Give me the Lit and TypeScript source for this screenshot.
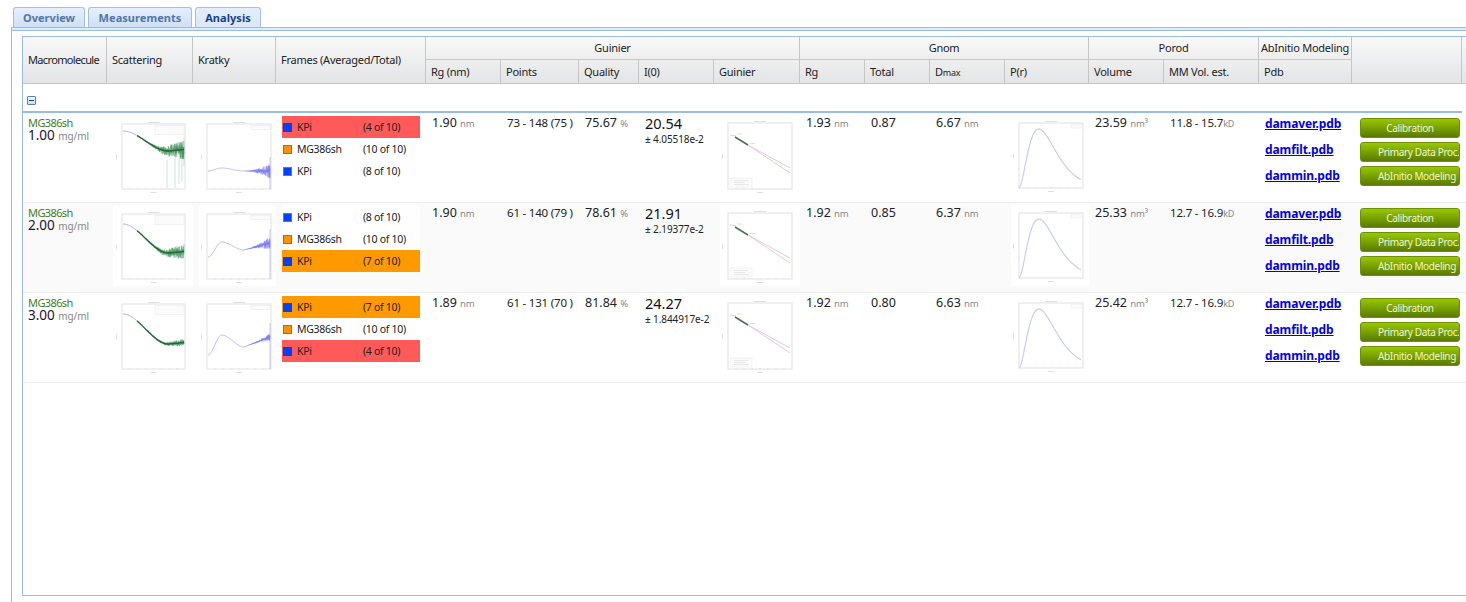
import { LitElement, html, css, svg } from 'lit';
import { customElement, property } from 'lit/decorators.js';

type PlotKind = 'scattering' | 'kratky' | 'guinier' | 'pr';

interface Frame { name: string; count: string; swatch: 'blue' | 'orange'; mark?: 'red' | 'amber'; }
interface Row {
  conc: string; rg: string; points: string; quality: string; i0: string; i0err: string;
  gRg: string; total: string; dmax: string; volume: string; mm: string;
  noise: number; spikes: boolean; kratky: number[]; curve: number[]; frames: Frame[];
}

const COLS = [84, 86, 83, 150, 75, 78, 60, 75, 86, 65, 65, 75, 84, 75, 95, 93, 110, 20];

const rows: Row[] = [
  {
    conc: '1.00', rg: '1.90', points: '73 - 148 (75 )', quality: '75.67', i0: '20.54', i0err: '± 4.05518e-2',
    gRg: '1.93', total: '0.87', dmax: '6.67', volume: '23.59', mm: '11.8 - 15.7',
    noise: 10, spikes: true, kratky: [55, 52, 55, 55], curve: [15, 35],
    frames: [
      { name: 'KPi', count: '(4 of 10)', swatch: 'blue', mark: 'red' },
      { name: 'MG386sh', count: '(10 of 10)', swatch: 'orange' },
      { name: 'KPi', count: '(8 of 10)', swatch: 'blue' },
    ],
  },
  {
    conc: '2.00', rg: '1.90', points: '61 - 140 (79 )', quality: '78.61', i0: '21.91', i0err: '± 2.19377e-2',
    gRg: '1.92', total: '0.85', dmax: '6.37', volume: '25.33', mm: '12.7 - 16.9',
    noise: 8, spikes: false, kratky: [51, 36, 44, 37], curve: [18, 47],
    frames: [
      { name: 'KPi', count: '(8 of 10)', swatch: 'blue' },
      { name: 'MG386sh', count: '(10 of 10)', swatch: 'orange' },
      { name: 'KPi', count: '(7 of 10)', swatch: 'blue', mark: 'amber' },
    ],
  },
  {
    conc: '3.00', rg: '1.89', points: '61 - 131 (70 )', quality: '81.84', i0: '24.27', i0err: '± 1.844917e-2',
    gRg: '1.92', total: '0.80', dmax: '6.63', volume: '25.42', mm: '12.7 - 16.9',
    noise: 4, spikes: false, kratky: [59, 39, 51, 41], curve: [18, 48],
    frames: [
      { name: 'KPi', count: '(7 of 10)', swatch: 'blue', mark: 'amber' },
      { name: 'MG386sh', count: '(10 of 10)', swatch: 'orange' },
      { name: 'KPi', count: '(4 of 10)', swatch: 'blue', mark: 'red' },
    ],
  },
];

function seeded(seed: number) {
  let s = seed;
  return () => {
    s = (s * 16807) % 2147483647;
    return s / 2147483647;
  };
}

const lerp = (a: number, b: number, t: number) => a + (b - a) * t;
const smooth = (t: number) => t * t * (3 - 2 * t);

@customElement('plot-thumb')
export class PlotThumb extends LitElement {
  static styles = css`
    :host { display: block; width: 80px; height: 80px; background: #fff; }
    svg { display: block; }
    .frame { fill: none; stroke: #e8eae8; stroke-width: 1.4; }
    .smudge { fill: #e0e0e0; }
    .legend { fill: #fbfbfb; stroke: #e8e8e8; stroke-width: 0.5; }
    .tick { stroke: #d0d0d0; stroke-width: 0.6; }
    .noise { fill: none; stroke: #1f7a3c; stroke-width: 0.5; opacity: 0.7; }
    .spike { fill: none; stroke: #a9d2b8; stroke-width: 0.6; }
    .fit { fill: none; stroke: #1f6b33; stroke-width: 1.4; }
    .start { fill: none; stroke: #a99fe8; stroke-width: 1; }
    .kratky { fill: none; stroke: #b4b4f8; stroke-width: 1; }
    .knoise { fill: none; stroke: #6868f5; stroke-width: 0.5; opacity: 0.75; }
    .blue { fill: none; stroke: #cfcff8; stroke-width: 1; }
    .red { fill: none; stroke: #f6c6c6; stroke-width: 1; }
    .dark { fill: none; stroke: #4d734d; stroke-width: 1.5; }
    .pr { fill: none; stroke: #cacafa; stroke-width: 1.2; }
  `;

  @property() kind: PlotKind = 'scattering';
  @property({ type: Object }) row!: Row;

  private frame(x0: number, x1: number, y0: number, y1: number) {
    const ticks = [];
    for (let i = 1; i < 8; i++) {
      const x = lerp(x0, x1, i / 8);
      ticks.push(svg`<line class="tick" x1=${x} x2=${x} y1=${y1} y2=${y1 - 1}></line>`);
    }
    return svg`
      <rect class="frame" x=${x0} y=${y0} width=${x1 - x0} height=${y1 - y0}></rect>
      ${ticks}
      <rect class="smudge" x=${(x0 + x1) / 2 - 6} y=${y0 - 2} width="12" height="1"></rect>
      <rect class="smudge" x=${(x0 + x1) / 2 - 3} y=${y1 + 3} width="6" height="1"></rect>
      <rect class="smudge" x=${x0 - 6} y=${(y0 + y1) / 2 - 2} width="1" height="5"></rect>`;
  }

  private scattering() {
    const { noise, spikes, curve } = this.row;
    const rnd = seeded(41 + noise);
    const points: string[] = [];
    let band = '';
    for (let x = 10; x <= 71; x += 0.25) {
      const t = (x - 10) / 61;
      const y = curve[0] + (curve[1] - curve[0]) * smooth(Math.min(1, t * 1.35)) + (t > 0.75 ? (t - 0.75) * -6 : 0);
      points.push(`${x},${y.toFixed(1)}`);
      if (t > 0.3) {
        const a = noise * Math.pow((t - 0.3) / 0.7, 1.3);
        band += `M${x} ${(y - a * rnd()).toFixed(1)}L${x} ${(y + a * rnd()).toFixed(1)}`;
      }
    }
    const tall = spikes ? 'M54 44L54 72M62 42L62 72M66 42L66 68M69 36L69 66M71 22L71 50' : '';
    return svg`
      ${this.frame(9, 72, 8, 73)}
      <rect class="legend" x="42" y="9.5" width="29" height="9"></rect>
      <path class="spike" d=${tall}></path>
      <path class="noise" d=${band}></path>
      <polyline class="fit" points=${points.slice(56).join(' ')}></polyline>
      <polyline class="start" points=${points.slice(0, 56).join(' ')}></polyline>`;
  }

  private kratky() {
    const [start, peak, trough, end] = this.row.kratky;
    const rnd = seeded(97 + start);
    const segs: string[] = [];
    let band = '';
    for (let x = 9; x <= 71; x += 0.25) {
      const t = (x - 9) / 62;
      let y: number;
      if (t < 0.22) y = lerp(start, peak, smooth(t / 0.22));
      else if (t < 0.58) y = lerp(peak, trough, smooth((t - 0.22) / 0.36));
      else y = lerp(trough, end, (t - 0.58) / 0.42);
      segs.push(`${x},${y.toFixed(1)}`);
      if (t > 0.55) {
        const a = (1 + this.row.noise * 0.7) * Math.pow((t - 0.55) / 0.45, 2);
        band += `M${x} ${(y - a * rnd()).toFixed(1)}L${x} ${(y + a * rnd()).toFixed(1)}`;
      }
    }
    band += `M71 ${end - 14}L71 73`;
    return svg`
      ${this.frame(8, 72, 8, 73)}
      <rect class="legend" x="52" y="9.5" width="19" height="4"></rect>
      <polyline class="kratky" points=${segs.join(' ')}></polyline>
      <path class="knoise" d=${band}></path>`;
  }

  private guinier() {
    return svg`
      ${this.frame(8, 72, 7, 73)}
      <path class="blue" d="M10 19L16 20"></path>
      <path class="blue" d="M28 29L70 52"></path>
      <path class="red" d="M28 29L70 57"></path>
      <path class="dark" d="M15 21L28 29"></path>
      <rect class="smudge" x="17" y="17.5" width="5" height="1"></rect>
      <rect class="smudge" x="30" y="27" width="5" height="1"></rect>
      <rect class="legend" x="10" y="62" width="22" height="9"></rect>
      <rect class="smudge" x="14" y="64" width="14" height="0.7"></rect>
      <rect class="smudge" x="14" y="66" width="11" height="0.7"></rect>
      <rect class="smudge" x="14" y="68" width="15" height="0.7"></rect>`;
  }

  private pr() {
    const k = 0.155;
    const max = 0.31 * 0.31 * Math.exp(-0.31 / k);
    const points: string[] = [];
    for (let x = 8; x <= 70; x += 1) {
      const t = (x - 8) / 64;
      const y = 72 - (59 * (t * t * Math.exp(-t / k))) / max;
      points.push(`${x},${y.toFixed(1)}`);
    }
    return svg`
      ${this.frame(8, 72, 7, 72)}
      <rect class="legend" x="60" y="8" width="11" height="4"></rect>
      <polyline class="pr" points=${points.join(' ')}></polyline>`;
  }

  render() {
    const body =
      this.kind === 'scattering' ? this.scattering()
        : this.kind === 'kratky' ? this.kratky()
          : this.kind === 'guinier' ? this.guinier()
            : this.pr();
    return html`<svg width="80" height="80" viewBox="0 0 80 80">${body}</svg>`;
  }
}

@customElement('app-root')
export class AppRoot extends LitElement {
  static styles = css`
    :host {
      display: block;
      width: 1466px;
      height: 602px;
      overflow: hidden;
      background: #fff;
      font-family: "Noto Sans", "Liberation Sans", sans-serif;
      font-size: 11px;
      letter-spacing: -0.25px;
      color: #222;
    }

    .tabs {
      display: flex;
      gap: 3px;
      height: 20px;
      padding: 7px 0 0 13px;
    }
    .tab {
      box-sizing: border-box;
      height: 20px;
      margin-bottom: -1px;
      padding-top: 2px;
      border: 1px solid #a3bfe6;
      border-bottom: none;
      border-radius: 3px 3px 0 0;
      background: linear-gradient(#e6f0fd, #cfe0f6);
      color: #5077a8;
      font-weight: 700;
      font-size: 11px;
      letter-spacing: 0.05px;
      text-align: center;
    }
    .tab.overview { width: 72px; }
    .tab.measurements { width: 104px; }
    .tab.analysis { width: 66px; }
    .tab.active {
      background: linear-gradient(#e3eefc, #dbe8fb);
      color: #15428b;
    }

    .strip {
      height: 2px;
      margin-left: 11px;
      border: 1px solid #99bbe8;
      border-right: none;
      background: #deecfd;
    }

    .panel {
      box-sizing: border-box;
      height: 571px;
      margin-left: 11px;
      padding: 5px 0 0 10px;
      border-left: 1px solid #99bbe8;
    }

    .grid {
      box-sizing: border-box;
      height: 560px;
      border: 1px solid #99bbe8;
      border-right: none;
      overflow: hidden;
    }

    table.main {
      table-layout: fixed;
      width: 1458px;
      border-collapse: separate;
      border-spacing: 0;
    }

    th {
      box-sizing: border-box;
      padding: 0 0 2px 5px;
      font-weight: 400;
      text-align: left;
      vertical-align: middle;
      border-right: 1px solid #c6c6c6;
      border-bottom: 1px solid #c6c6c6;
      background: linear-gradient(#f9f9f9, #e3e4e6);
      white-space: nowrap;
      overflow: hidden;
    }
    th.tight { letter-spacing: -0.65px; }
    th.group {
      text-align: center;
      padding: 0 0 2px;
      background: linear-gradient(#f9f9f9, #eeeeee);
    }
    tr.head-top th { height: 23px; }
    tr.head-sub th {
      height: 24px;
      padding-bottom: 0;
      background: linear-gradient(#efefef, #e3e4e6);
    }
    .small { font-size: 9px; }

    td.group-row {
      box-sizing: border-box;
      height: 29px;
      padding: 12px 0 0 4px;
      border-bottom: 2px solid #99bbe8;
      vertical-align: top;
      line-height: 0;
    }
    td.blank { border: none; }

    .collapse {
      display: inline-block;
      box-sizing: border-box;
      width: 9px;
      height: 9px;
      border: 1px solid #5b7fa8;
      border-radius: 1px;
      background: linear-gradient(#f4f8fd, #c9dcf2);
      position: relative;
    }
    .collapse::after {
      content: '';
      position: absolute;
      left: 1px;
      right: 1px;
      top: 3px;
      height: 1px;
      background: #1c3f72;
    }

    tr.data td {
      box-sizing: border-box;
      height: 90px;
      padding: 3px 0 0 6px;
      vertical-align: top;
      border-bottom: 1px solid #ededed;
      white-space: nowrap;
      overflow: hidden;
    }
    tr.data.alt td { background: #fafafa; }

    .name { color: #3f7d1e; font-size: 11px; letter-spacing: -0.6px; line-height: 13px; margin-left: -1px; }
    .conc { font-size: 13.5px; letter-spacing: 0; line-height: 13px; color: #221133; margin-left: -1px; }
    .conc span { font-size: 10px; letter-spacing: -0.1px; color: #888; }

    .val { font-size: 12.5px; letter-spacing: 0; line-height: 14px; color: #222; }
    .unit { font-size: 9.5px; letter-spacing: -0.1px; color: #888; }
    .kd { font-size: 9px; color: #888; }
    .pts { font-size: 11.5px; letter-spacing: -0.2px; line-height: 14px; }
    .big { font-size: 14.5px; letter-spacing: 0; line-height: 14px; color: #111; }
    .err { font-size: 10px; letter-spacing: -0.1px; line-height: 13px; margin-top: 3px; }

    .frames { width: 138px; }
    .fr {
      display: flex;
      align-items: center;
      height: 22px;
      font-size: 10.5px;
      letter-spacing: -0.3px;
      background: #fff;
    }
    .fr.red { background: #ff5a5a; }
    .fr.amber { background: #ff9900; }
    .swatch {
      box-sizing: border-box;
      width: 9px;
      height: 9px;
      margin: 0 5px 0 1px;
      border: 1px solid #777;
    }
    .fr.red .swatch, .fr.amber .swatch { border-color: transparent; }
    .swatch.blue { background: #0040ff; }
    .swatch.orange { background: #ff9000; }
    .fr-name { width: 66px; }

    .links { display: flex; flex-direction: column; gap: 8px; margin-top: -1px; }
    .links a {
      font-size: 12px;
      line-height: 18px;
      font-weight: 700;
      letter-spacing: -0.1px;
      color: #0000ee;
      text-decoration: underline;
    }

    .actions { display: flex; flex-direction: column; gap: 4px; padding: 2px 0 0 2px; }
    .btn {
      box-sizing: border-box;
      width: 100px;
      height: 20px;
      padding: 0;
      border: 1px solid #6f9100;
      border-radius: 3px;
      background: linear-gradient(#98c800, #5a7a00);
      color: #eef8d2;
      font: 10px/17px "Noto Sans", "Liberation Sans", sans-serif;
      letter-spacing: -0.35px;
      text-align: center;
      white-space: nowrap;
      overflow: hidden;
    }
    .btn.lead { text-align: left; padding-left: 17px; }
  `;

  private renderRow(r: Row, i: number) {
    return html`
      <tr class="data ${i === 1 ? 'alt' : ''}">
        <td>
          <div class="name">MG386sh</div>
          <div class="conc">${r.conc} <span>mg/ml</span></div>
        </td>
        <td><plot-thumb kind="scattering" .row=${r}></plot-thumb></td>
        <td><plot-thumb kind="kratky" .row=${r}></plot-thumb></td>
        <td>
          <div class="frames">
            ${r.frames.map(f => html`
              <div class="fr ${f.mark ?? ''}">
                <span class="swatch ${f.swatch}"></span>
                <span class="fr-name">${f.name}</span>
                <span>${f.count}</span>
              </div>`)}
          </div>
        </td>
        <td><div class="val">${r.rg} <span class="unit">nm</span></div></td>
        <td><div class="pts">${r.points}</div></td>
        <td><div class="val">${r.quality} <span class="unit">%</span></div></td>
        <td>
          <div class="big">${r.i0}</div>
          <div class="err">${r.i0err}</div>
        </td>
        <td><plot-thumb kind="guinier" .row=${r}></plot-thumb></td>
        <td><div class="val">${r.gRg} <span class="unit">nm</span></div></td>
        <td><div class="val">${r.total}</div></td>
        <td><div class="val">${r.dmax} <span class="unit">nm</span></div></td>
        <td><plot-thumb kind="pr" .row=${r}></plot-thumb></td>
        <td><div class="val">${r.volume} <span class="unit">nm³</span></div></td>
        <td><div class="pts">${r.mm}<span class="kd">kD</span></div></td>
        <td>
          <div class="links">
            <a href="#">damaver.pdb</a>
            <a href="#">damfilt.pdb</a>
            <a href="#">dammin.pdb</a>
          </div>
        </td>
        <td>
          <div class="actions">
            <button class="btn">Calibration</button>
            <button class="btn lead">Primary Data Proc.</button>
            <button class="btn lead">AbInitio Modeling</button>
          </div>
        </td>
        <td class="blank"></td>
      </tr>`;
  }

  render() {
    return html`
      <div class="tabs">
        <div class="tab overview">Overview</div>
        <div class="tab measurements">Measurements</div>
        <div class="tab analysis active">Analysis</div>
      </div>
      <div class="strip"></div>
      <div class="panel">
        <div class="grid">
          <table class="main">
            <colgroup>${COLS.map(w => html`<col width=${w} />`)}</colgroup>
            <thead>
              <tr class="head-top">
                <th class="tight" rowspan="2">Macromolecule</th>
                <th rowspan="2">Scattering</th>
                <th rowspan="2">Kratky</th>
                <th rowspan="2">Frames (Averaged/Total)</th>
                <th class="group" colspan="5">Guinier</th>
                <th class="group" colspan="4">Gnom</th>
                <th class="group" colspan="2">Porod</th>
                <th class="group">AbInitio Modeling</th>
                <th rowspan="2"></th>
                <th rowspan="2"></th>
              </tr>
              <tr class="head-sub">
                <th>Rg (nm)</th>
                <th>Points</th>
                <th>Quality</th>
                <th>I(0)</th>
                <th>Guinier</th>
                <th>Rg</th>
                <th>Total</th>
                <th>D<span class="small">max</span></th>
                <th>P(r)</th>
                <th>Volume</th>
                <th>MM Vol. est.</th>
                <th>Pdb</th>
              </tr>
            </thead>
            <tbody>
              <tr>
                <td class="group-row" colspan="17"><span class="collapse"></span></td>
                <td class="blank"></td>
              </tr>
              ${rows.map((r, i) => this.renderRow(r, i))}
            </tbody>
          </table>
        </div>
      </div>
    `;
  }
}
